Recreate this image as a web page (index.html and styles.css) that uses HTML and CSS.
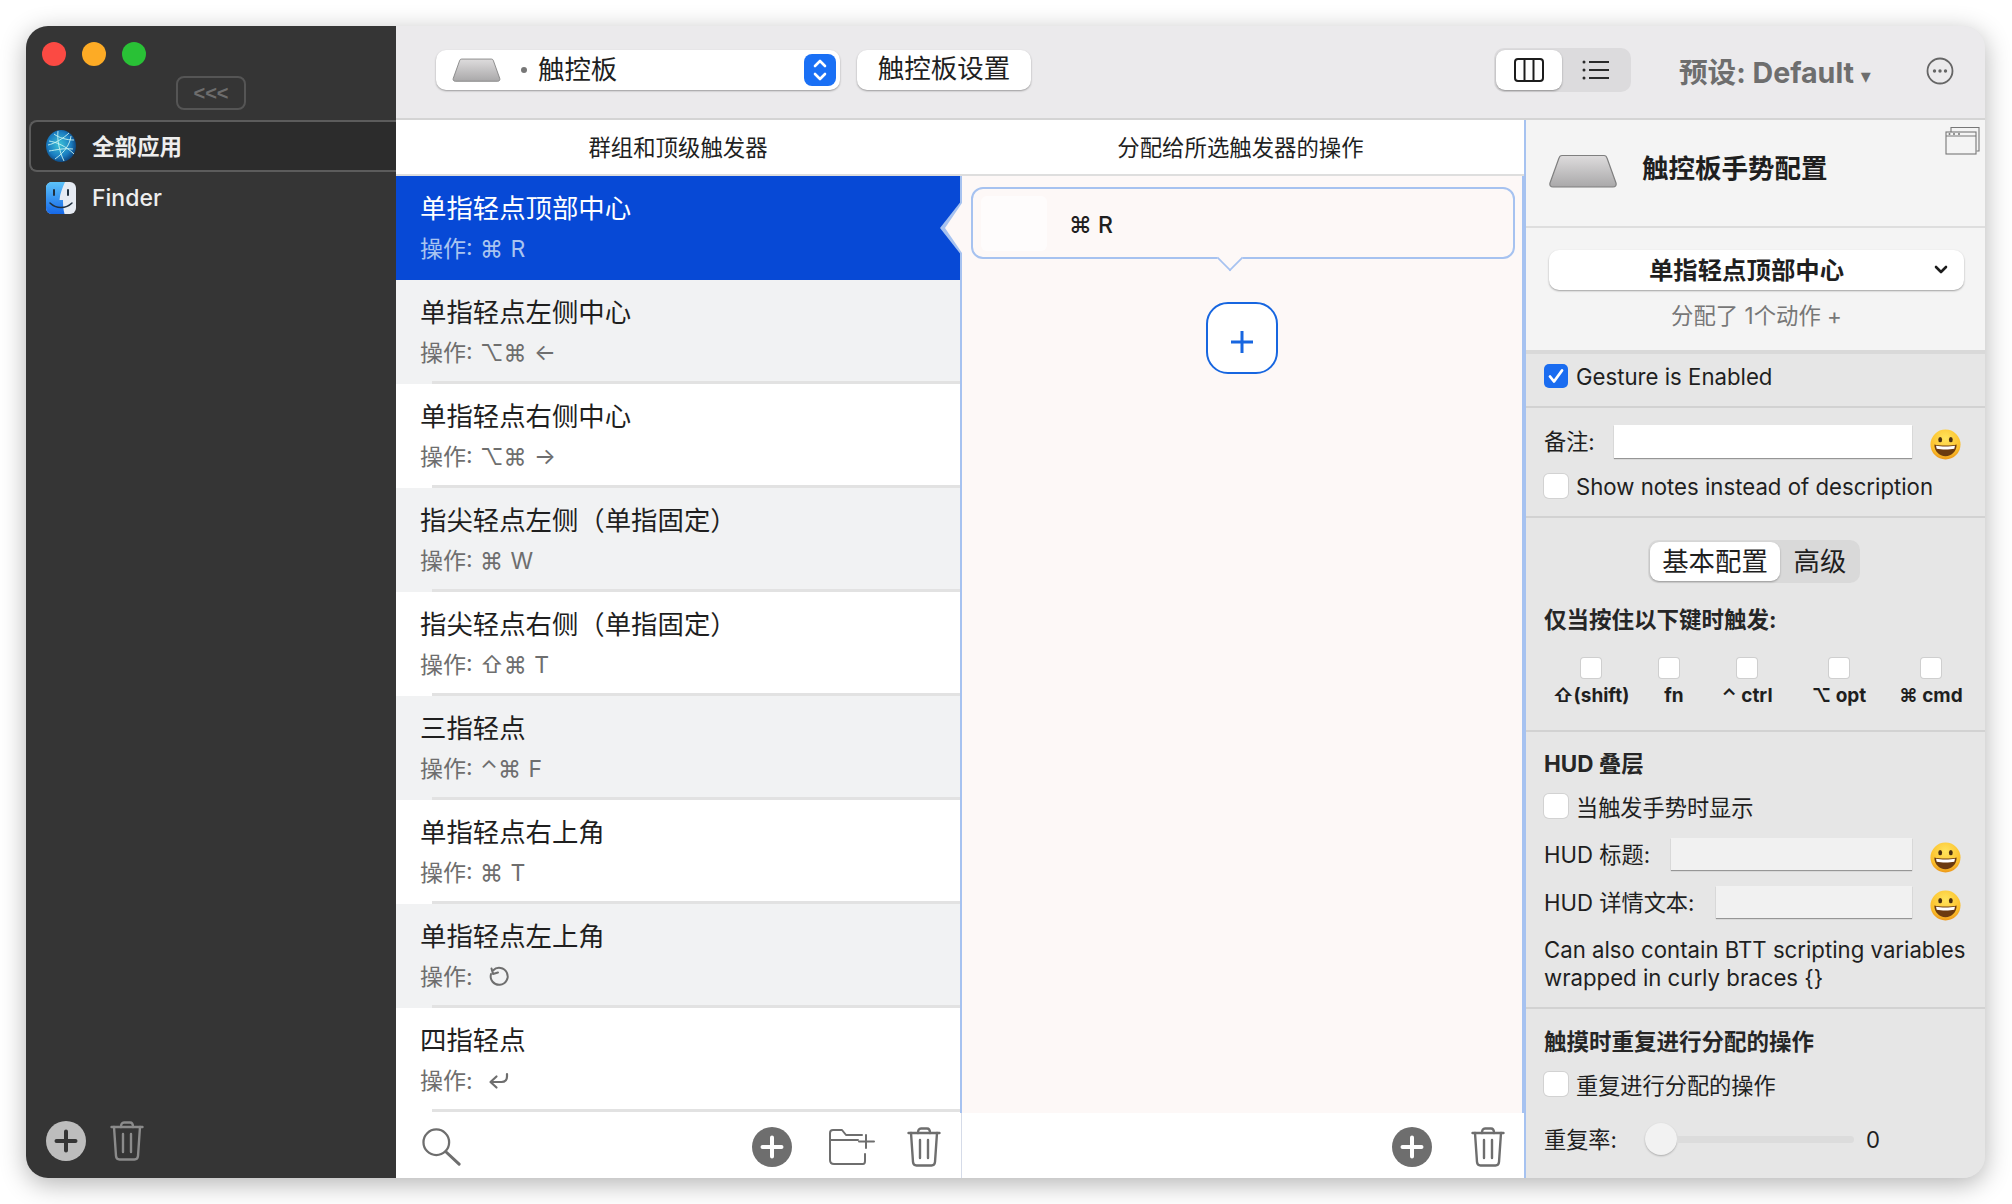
FILE: index.html
```html
<!DOCTYPE html>
<html lang="zh">
<head>
<meta charset="utf-8">
<title>BetterTouchTool</title>
<link rel="stylesheet" href="styles.css">
</head>
<body>
<svg class="defs" width="0" height="0">
  <defs>
    <linearGradient id="padg" x1="0" y1="0" x2="0" y2="1"><stop offset="0" stop-color="#dedcdd"/><stop offset="1" stop-color="#a9a8a9"/></linearGradient>
    <radialGradient id="emog" cx=".5" cy=".3" r=".75"><stop offset="0" stop-color="#ffe45c"/><stop offset=".7" stop-color="#fcc02c"/><stop offset="1" stop-color="#e78a12"/></radialGradient>
    <symbol id="pad" viewBox="0 0 68 34"><path d="M13 1.500h42c1.500 0 2.500.8 3 2.500l9 25c.6 2.200-.6 4-3 4H4c-2.400 0-3.600-1.800-3-4l9-25c.5-1.700 1.500-2.500 3-2.500z" fill="url(#padg)" stroke="#7f7f7f" stroke-width="1.200"/></symbol>
    <symbol id="emoji" viewBox="0 0 32 32"><circle cx="16" cy="16" r="15.500" fill="url(#emog)"/><ellipse cx="10.500" cy="11" rx="2" ry="2.800" fill="#4a2f12"/><ellipse cx="21.500" cy="11" rx="2" ry="2.800" fill="#4a2f12"/><path d="M4.500 16c4 1.500 19 1.500 23 0 0 7-5 12-11.500 12S4.500 23 4.500 16z" fill="#6b3a10"/><path d="M6.200 17.200c5 1 14.600 1 19.600 0l-.7 3.300c-5 1-13.200 1-18.200 0z" fill="#fff"/></symbol>
    <symbol id="trash" viewBox="0 0 34 40"><g fill="none" stroke="currentColor" stroke-width="2.400" stroke-linecap="round" stroke-linejoin="round"><path d="M1.500 6h31"/><path d="M11 6c0-3 1-4.500 3-4.500h6c2 0 3 1.500 3 4.500"/><path d="M4 6l2 29c.2 2.300 1.300 3.500 3.500 3.500h15c2.200 0 3.300-1.200 3.500-3.500l2-29"/><path d="M13 13v18M21 13v18"/></g></symbol>
    <symbol id="plusc" viewBox="0 0 40 40"><circle cx="20" cy="20" r="20" fill="currentColor"/><path d="M20 10.500v19M10.500 20h19" stroke="var(--mark)" stroke-width="4" stroke-linecap="round"/></symbol>
  </defs>
</svg>
<main class="window">
  <aside class="sidebar">
    <div class="lights"><span class="light red"></span><span class="light amber"></span><span class="light green"></span></div>
    <div class="collapse">&lt;&lt;&lt;</div>
    <div class="app app-on">
      <svg class="appicon" viewBox="0 0 30 32">
        <defs><radialGradient id="globe" cx=".45" cy=".45" r=".6"><stop offset="0" stop-color="#3cc4d8"/><stop offset=".65" stop-color="#1a7cc0"/><stop offset="1" stop-color="#0a3a70"/></radialGradient></defs>
        <ellipse cx="15" cy="16" rx="15" ry="16" fill="url(#globe)"/>
        <path d="M2 15C8 14 18 8 23 3M3 11c7 1 17 5 25 13M12 1c-1 8 1 20 6 30M25 6c-1 8-6 16-16 23M3 21c7-1 14-3 24-2M8 4c5 4 13 6 20 6" fill="none" stroke="#c9f4f2" stroke-width=".9"/>
      </svg>
      <span class="appname strong">全部应用</span>
    </div>
    <div class="app">
      <svg class="appicon" viewBox="0 0 30 32">
        <defs><linearGradient id="fl" x1="0" y1="0" x2="0" y2="1"><stop offset="0" stop-color="#5cc3fa"/><stop offset="1" stop-color="#1668e8"/></linearGradient></defs>
        <rect width="30" height="32" rx="6" fill="#e6ebf3"/>
        <path d="M6 0h13c-2.500 6-5 11-5.500 18H17c0 5 .3 9 1.500 14H6c-3.500 0-6-2.500-6-6V6c0-3.500 2.500-6 6-6z" fill="url(#fl)"/>
        <path d="M8 8v5M22 8v5" stroke="#20303f" stroke-width="2" stroke-linecap="round"/>
        <path d="M4 21c6 6 16 6 22 0" fill="none" stroke="#20303f" stroke-width="1.500" stroke-linecap="round"/>
      </svg>
      <span class="appname">Finder</span>
    </div>
    <div class="side-foot">
      <svg class="ic40 plus-light"><use href="#plusc"/></svg>
      <svg class="ictrash trash-dark"><use href="#trash"/></svg>
    </div>
  </aside>

  <div class="main">
    <header class="toolbar">
      <div class="popup">
        <svg class="padsmall"><use href="#pad"/></svg>
        <span class="dot"></span>
        <span class="popup-label">触控板</span>
        <span class="stepper">
          <svg width="20" height="26" viewBox="0 0 20 26"><path d="M5 9l5-5 5 5M5 17l5 5 5-5" fill="none" stroke="#fff" stroke-width="2.600" stroke-linecap="round" stroke-linejoin="round"/></svg>
        </span>
      </div>
      <div class="btn">触控板设置</div>
      <div class="viewseg">
        <span class="viewon">
          <svg width="30" height="24" viewBox="0 0 30 24"><rect x="1" y="1" width="28" height="22" rx="3" fill="none" stroke="#1c1c1c" stroke-width="2"/><path d="M10.500 1v22M19.500 1v22" stroke="#1c1c1c" stroke-width="2"/></svg>
        </span>
        <span class="viewoff">
          <svg width="28" height="20" viewBox="0 0 28 20"><g stroke="#2a2a2a" stroke-width="2"><path d="M7 2h20M7 10h20M7 18h20"/></g><g fill="#2a2a2a"><circle cx="2" cy="2" r="1.500"/><circle cx="2" cy="10" r="1.500"/><circle cx="2" cy="18" r="1.500"/></g></svg>
        </span>
      </div>
      <div class="preset">预设: Default <small>▾</small></div>
      <svg class="more" width="28" height="28" viewBox="0 0 28 28"><circle cx="14" cy="14" r="12.500" fill="none" stroke="#666" stroke-width="1.800"/><g fill="#666"><circle cx="8.500" cy="14" r="1.700"/><circle cx="14" cy="14" r="1.700"/><circle cx="19.500" cy="14" r="1.700"/></g></svg>
    </header>

    <div class="content">
      <section class="col col-list">
        <div class="colhead">群组和顶级触发器</div>
        <div class="rows">
          <div class="row row-sel">
            <div class="rt">单指轻点顶部中心</div><div class="rs">操作: ⌘ R</div>
            <span class="beak"></span>
          </div>
          <div class="row row-alt"><div class="rt">单指轻点左侧中心</div><div class="rs">操作: ⌥⌘ ←</div></div>
          <div class="row"><div class="rt">单指轻点右侧中心</div><div class="rs">操作: ⌥⌘ →</div></div>
          <div class="row row-alt"><div class="rt">指尖轻点左侧（单指固定）</div><div class="rs">操作: ⌘ W</div></div>
          <div class="row"><div class="rt">指尖轻点右侧（单指固定）</div><div class="rs">操作: ⇧⌘ T</div></div>
          <div class="row row-alt"><div class="rt">三指轻点</div><div class="rs">操作: ⌃⌘ F</div></div>
          <div class="row"><div class="rt">单指轻点右上角</div><div class="rs">操作: ⌘ T</div></div>
          <div class="row row-alt"><div class="rt">单指轻点左上角</div><div class="rs">操作: <svg class="undo" width="22" height="22" viewBox="0 0 22 22"><path d="M5 4.500A8.500 8.500 0 1 1 3 8" fill="none" stroke="#6e6e6e" stroke-width="2" stroke-linecap="round"/><path d="M3.500 2.500l1.500 5.500 5-1.500" fill="none" stroke="#6e6e6e" stroke-width="2" stroke-linecap="round" stroke-linejoin="round"/></svg></div></div>
          <div class="row"><div class="rt">四指轻点</div><div class="rs">操作: <svg class="undo" width="22" height="20" viewBox="0 0 22 20"><path d="M19 2v2.500c0 3.500-2 5.500-5.500 5.500H3M8.500 4.500L2.500 10l6 5.500" fill="none" stroke="#6e6e6e" stroke-width="2.200" stroke-linecap="round" stroke-linejoin="round"/></svg></div></div>
        </div>
        <footer class="foot foot-list">
          <svg class="search" width="40" height="38" viewBox="0 0 42 40"><circle cx="15" cy="15" r="13.500" fill="none" stroke="#6e6e6e" stroke-width="2.400"/><path d="M25 25l14 13" stroke="#6e6e6e" stroke-width="3.200" stroke-linecap="round"/></svg>
          <svg class="ic40 plus-dark push"><use href="#plusc"/></svg>
          <svg class="folder" width="48" height="36" viewBox="0 0 48 36"><g fill="none" stroke="#6e6e6e" stroke-width="2" stroke-linecap="round" stroke-linejoin="round"><path d="M34 35H5c-2.500 0-4-1.500-4-4V4c0-2 1-3 3-3h9l4 5h16M1 11h28M36 25v7c0 1.500-.8 3-2 3"/><path d="M37 6v13M30 12.500h15"/></g></svg>
          <svg class="ictrash trash-gray"><use href="#trash"/></svg>
        </footer>
      </section>

      <section class="col col-mid">
        <div class="colhead">分配给所选触发器的操作</div>
        <div class="midbody">
          <div class="card">
            <span class="cardicon"></span>
            <span class="cardtext">⌘ R</span>
            <span class="cardnotch"></span>
          </div>
          <div class="addbtn"><svg width="22" height="22" viewBox="0 0 22 22"><path d="M11 0v22M0 11h22" stroke="#1766e0" stroke-width="3"/></svg></div>
        </div>
        <footer class="foot foot-mid">
          <svg class="ic40 plus-dark"><use href="#plusc"/></svg>
          <svg class="ictrash trash-gray"><use href="#trash"/></svg>
        </footer>
      </section>

      <aside class="panel">
        <div class="sec sec-head">
          <svg class="padbig"><use href="#pad"/></svg>
          <h2 class="ptitle">触控板手势配置</h2>
          <svg class="winicon" width="36" height="30" viewBox="0 0 36 30"><g fill="none" stroke="#777" stroke-width="1.100"><path d="M6 6V1.500h28V25h-2.500"/><rect x="1" y="6" width="30" height="22" fill="#f4f4f4"/><path d="M1 10h30"/></g><g fill="#777"><circle cx="4.500" cy="8" r="1"/><circle cx="9" cy="8" r="1"/><circle cx="14" cy="8" r="1"/></g></svg>
        </div>
        <div class="sec sec-trigger">
          <div class="trigger"><span>单指轻点顶部中心</span>
            <svg class="chev" width="14" height="10" viewBox="0 0 14 10"><path d="M2 2l5 5 5-5" fill="none" stroke="#1c1c1c" stroke-width="2.600" stroke-linecap="round" stroke-linejoin="round"/></svg>
          </div>
          <div class="assigned">分配了 1个动作 +</div>
        </div>
        <div class="sec sec-enable">
          <label class="check"><span class="cb cb-on"><svg width="20" height="20" viewBox="0 0 20 20"><path d="M4 10.500l4 5 8-11" fill="none" stroke="#fff" stroke-width="2.800" stroke-linecap="round" stroke-linejoin="round"/></svg></span>Gesture is Enabled</label>
        </div>
        <div class="sec sec-notes">
          <div class="field"><span class="flabel">备注:</span><span class="input"></span><svg class="emoji"><use href="#emoji"/></svg></div>
          <label class="check"><span class="cb"></span>Show notes instead of description</label>
        </div>
        <div class="sec sec-mods">
          <div class="tabs"><span class="tab-on">基本配置</span><span class="tab-off">高级</span></div>
          <div class="strong-label">仅当按住以下键时触发:</div>
          <div class="mods">
            <div class="mod m1"><span class="cb-s"></span><b>⇧(shift)</b></div>
            <div class="mod m2"><span class="cb-s"></span><b>fn</b></div>
            <div class="mod m3"><span class="cb-s"></span><b>⌃ ctrl</b></div>
            <div class="mod m4"><span class="cb-s"></span><b>⌥ opt</b></div>
            <div class="mod m5"><span class="cb-s"></span><b>⌘ cmd</b></div>
          </div>
        </div>
        <div class="sec sec-hud">
          <div class="strong-label hudtitle">HUD 叠层</div>
          <label class="check hudcheck"><span class="cb"></span>当触发手势时显示</label>
          <div class="field hudf1"><span class="flabel">HUD 标题:</span><span class="input input-dim"></span><svg class="emoji"><use href="#emoji"/></svg></div>
          <div class="field hudf2"><span class="flabel">HUD 详情文本:</span><span class="input input-dim"></span><svg class="emoji"><use href="#emoji"/></svg></div>
          <p class="hint">Can also contain BTT scripting variables<br>wrapped in curly braces {}</p>
        </div>
        <div class="sec sec-repeat">
          <div class="strong-label">触摸时重复进行分配的操作</div>
          <label class="check repcheck"><span class="cb"></span>重复进行分配的操作</label>
          <div class="rate"><span class="flabel">重复率:</span><span class="slider"><span class="knob"></span><span class="track"></span></span><span class="rateval">0</span></div>
        </div>
      </aside>
    </div>
  </div>
</main>
</body>
</html>
```
FILE: styles.css
```css
* { box-sizing: border-box; }
html, body { margin: 0; height: 100%; background: #fff; }
body {
  width: 2012px; height: 1204px; padding: 26px 27px 26px 26px; overflow: hidden;
  font-family: Inter, "Noto Sans CJK SC", "DejaVu Sans", sans-serif;
  color: #1f1f1f; font-size: 22px;
}
.defs { position: absolute; }
.window {
  display: flex; width: 1959px; height: 1152px; border-radius: 22px; overflow: hidden;
  box-shadow: 0 6px 26px rgba(0,0,0,.3); background: #e6e6e6;
}
.sidebar { width: 370px; flex: none; background: #353535; display: flex; flex-direction: column; color: #eee; }
.lights { display: flex; gap: 16px; padding: 16px 0 0 16px; }
.light { width: 24px; height: 24px; border-radius: 50%; }
.red { background: #fb4a43; } .amber { background: #fdab25; } .green { background: #29c136; }
.collapse {
  width: 70px; height: 34px; margin: 10px 0 0 150px; border: 2px solid #555; border-radius: 8px;
  color: #6d6d6d; font: 700 20px/31px "Liberation Sans", sans-serif; text-align: center;
}
.app { display: flex; align-items: center; height: 52px; margin-left: 3px; padding-left: 15px; border: 2px solid transparent; border-right: 0; }
.app-on { margin-top: 10px; background: #2c2c2c; border-color: #5c5c5c; border-radius: 8px 0 0 8px; }
.app + .app { height: 32px; margin-top: 10px; }
.appicon { width: 30px; height: 32px; flex: none; }
.appname { margin-left: 16px; font-size: 23px; font-weight: 500; }
.appname.strong { font-size: 22.500px; font-weight: 700; padding-bottom: 3px; }
.side-foot { margin-top: auto; display: flex; align-items: center; gap: 24px; padding: 0 0 17px 20px; }
.ic40 { width: 40px; height: 40px; flex: none; }
.ictrash { width: 34px; height: 40px; flex: none; }
.plus-light { color: #bdbdbd; --mark: #353535; }
.trash-dark { color: #8b8b8b; }
.plus-dark { color: #6e6e6e; --mark: #fff; }
.trash-gray { color: #6e6e6e; }

.main { flex: 1; min-width: 0; display: flex; flex-direction: column; }
.toolbar { height: 94px; flex: none; display: flex; align-items: flex-start; background: #ebeaec; border-bottom: 2px solid #d4d4d4; padding: 24px 0 0 40px; }
.popup {
  width: 404px; height: 40px; display: flex; align-items: center; background: #fff; border-radius: 10px;
  box-shadow: 0 1px 2px rgba(0,0,0,.35); padding: 0 4px 0 16px;
}
.padsmall { width: 49px; height: 24px; }
.dot { width: 6px; height: 6px; border-radius: 50%; background: #777; margin-left: 20px; }
.popup-label { font-size: 26.400px; margin: -2px 0 0 11px; line-height: 38px; }
.stepper { margin-left: auto; width: 32px; height: 32px; border-radius: 8px; background: #1a70f5; display: flex; align-items: center; justify-content: center; }
.btn {
  margin-left: 17px; width: 174px; height: 40px; background: #fff; border-radius: 10px; text-align: center;
  font-size: 26.500px; line-height: 36px; box-shadow: 0 1px 2px rgba(0,0,0,.35);
}
.viewseg { margin-left: 463px; margin-top: -2px; width: 137px; height: 44px; display: flex; background: #dcdbdd; border-radius: 10px; padding: 2px; }
.viewon { width: 66px; height: 40px; background: #fff; border-radius: 9px; box-shadow: 0 1px 2px rgba(0,0,0,.35); display: flex; align-items: center; justify-content: center; }
.viewoff { flex: 1; display: flex; align-items: center; justify-content: center; }
.preset { margin-left: 48px; margin-top: 5px; font-size: 28.600px; line-height: 36px; font-weight: 700; color: #6e6e6e; white-space: nowrap; }
.preset small { font-size: 20px; }
.more { margin-left: 55px; margin-top: 7px; }

.content { flex: 1; min-height: 0; display: flex; }
.col { display: flex; flex-direction: column; flex: none; background: #fff; }
.col-list { width: 566px; }
.col-mid { width: 562px; }
.colhead { height: 56px; flex: none; text-align: center; line-height: 55px; font-size: 22.400px; border-bottom: 2px solid #dedede; }
.col-list .colhead { padding-right: 2px; }
.col-mid .colhead { padding-right: 5px; }
.rows { flex: 1; min-height: 0; border-right: 2px solid #a6c2f0; }
.row { position: relative; height: 104px; display: flex; flex-direction: column; padding-left: 24px; }
.row::after { content: ""; display: block; height: 3px; margin: auto 0 0 12px; background: #e2e2e2; }
.row-alt { background: #f1f2f3; }
.row-sel { background: #0749d6; }
.row-sel::after { display: none; }
.rt { font-size: 26.400px; line-height: 36px; padding-top: 14px; height: 50px; white-space: nowrap; }
.rs { font-size: 23px; word-spacing: 1px; line-height: 30px; margin-top: 8px; height: 30px; color: #6e6e6e; white-space: nowrap; }
.row-sel .rt { color: #fff; }
.row-sel .rs { color: #a9c4f0; }
.undo { vertical-align: -3px; margin-left: 8px; }
.beak { position: absolute; right: -2px; top: 24px; width: 22px; height: 56px; background: #a6c2f0; clip-path: polygon(100% 0, 0 50%, 100% 100%); }
.beak::after { content: ""; position: absolute; inset: 3px 0 3px 5px; background: #fdf8f7; clip-path: polygon(100% 0, 0 50%, 100% 100%); }
.foot { height: 65px; flex: none; display: flex; align-items: center; padding-top: 2px; }
.foot-list { border-right: 1px solid #d5dbe8; padding-left: 26px; padding-right: 20px; }
.push { margin-left: auto; }
.folder { margin-left: 37px; }
.foot-list .ictrash { margin-left: 30px; }
.foot-mid { justify-content: flex-end; padding-right: 19px; }
.foot-mid .ictrash { margin-left: 39px; }
.midbody { flex: 1; min-height: 0; background: #fdf8f7; border-right: 2px solid #a6c2f0; padding: 11px 0 0 9px; }
.card { position: relative; width: 544px; height: 72px; border: 2px solid #a6c2f0; border-radius: 12px; display: flex; align-items: center; padding: 3px 0 0 8px; background: #fdf8f7; }
.cardicon { width: 66px; height: 55px; margin-top: -3px; border-radius: 6px; background: #fefcfc; }
.cardtext { margin-left: 22px; font-size: 23px; font-weight: 500; }
.cardnotch { position: absolute; left: 246px; bottom: -12px; width: 22px; height: 22px; transform: rotate(45deg) scale(.85); background: #fdf8f7; border-right: 2px solid #a6c2f0; border-bottom: 2px solid #a6c2f0; }
.addbtn { width: 72px; height: 72px; margin: 43px 0 0 235px; padding-top: 8px; border: 2px solid #1766e0; border-radius: 22px; background: #fff; display: flex; align-items: center; justify-content: center; }

.panel { flex: 1; min-width: 0; border-left: 2px solid #a6c2f0; background: #e6e6e6; font-size: 22.200px; }
.sec { border-bottom: 2px solid #d2d2d2; padding-left: 18px; }
.sec-head { position: relative; height: 108px; background: #f4f4f4; display: flex; align-items: center; padding: 0 0 5px 23px; border-bottom-color: #dedede; }
.padbig { width: 68px; height: 34px; flex: none; }
.ptitle { margin: 0 0 0 25px; font-size: 26.500px; line-height: 36px; font-weight: 700; padding-bottom: 6px; }
.winicon { position: absolute; right: 4px; top: 6px; }
.sec-trigger { height: 126px; background: #f4f4f4; border-bottom: 4px solid #d9d9d9; padding: 22px 0 0 23px; }
.trigger { position: relative; width: 415px; height: 40px; background: #fff; border-radius: 10px; box-shadow: 0 1px 2px rgba(0,0,0,.35); text-align: center; font-size: 24.400px; font-weight: 700; line-height: 40px; padding-right: 20px; }
.chev { position: absolute; right: 16px; top: 15px; }
.assigned { margin: 12px 0 0 -23px; text-align: center; font-size: 22.400px; color: #777; line-height: 28px; padding-left: 2px; }
.check { display: flex; align-items: center; height: 24px; white-space: nowrap; }
.cb { width: 24px; height: 24px; flex: none; margin-right: 8px; border-radius: 5px; background: #fff; box-shadow: 0 0 0 1px #d2d2d2; display: flex; align-items: center; justify-content: center; }
.cb-on { background: #1a6cf0; box-shadow: none; }
.sec-enable { height: 54px; padding-top: 10px; }
.sec-notes { height: 110px; padding-top: 16px; }
.field { display: flex; align-items: center; height: 34px; }
.flabel { white-space: nowrap; margin-top: -3px; }
.input { height: 33px; width: 298px; margin-left: auto; flex: none; background: #fff; box-shadow: 0 1px 1px rgba(0,0,0,.35); }
.input-dim { background: #f1f1f1; }
.hudf1 .input { width: 241px; }
.hudf2 .input { width: 196px; }
.emoji { width: 31px; height: 31px; margin: 6px 24px 0 18px; flex: none; }
.sec-notes .check { margin-top: 16px; }
.sec-mods { height: 214px; padding-top: 22px; }
.tabs { display: flex; width: 212px; height: 43px; margin-left: 104px; background: #d9d9d9; border-radius: 10px; font-size: 26.400px; line-height: 38px; padding: 2px; }
.tab-on { width: 130px; background: #fff; border-radius: 9px; text-align: center; box-shadow: 0 1px 2px rgba(0,0,0,.3); }
.tab-off { flex: 1; text-align: center; padding-left: 2px; }
.strong-label { font-size: 22.500px; font-weight: 700; line-height: 30px; color: #262626; }
.sec-mods .strong-label { margin-top: 22px; }
.mods { display: flex; margin-top: 23px; margin-left: -1px; }
.mod { display: flex; flex-direction: column; align-items: center; flex: none; }
.mod b { font-size: 19px; font-weight: 700; line-height: 22px; margin-top: 7px; white-space: nowrap; font-family: Inter, "DejaVu Sans", sans-serif; }
.cb-s { width: 20px; height: 20px; background: #fff; border-radius: 3px; box-shadow: 0 0 0 1px #cfcfcf; }
.m1 { width: 96px; } .m2 { width: 60px; } .m3 { width: 96px; } .m4 { width: 88px; } .m5 { width: 96px; }
.m2 b { margin-left: 10px; }
.sec-hud { height: 277px; padding-top: 17px; }
.hudcheck { margin-top: 15px; }
.hudf1 { margin-top: 20px; height: 32px; }
.hudf2 { margin-top: 16px; height: 32px; }
.hudf1 .input, .hudf2 .input { height: 32px; }
.hint { margin: 18px 0 0; line-height: 28px; white-space: nowrap; }
.sec-repeat { border-bottom: 0; padding-top: 18px; }
.repcheck { margin-top: 15px; }
.rate { display: flex; align-items: center; margin-top: 27px; height: 32px; }
.slider { display: flex; align-items: center; margin-left: 28px; width: 209px; }
.knob { width: 32px; height: 32px; border-radius: 50%; background: #f2f2f2; box-shadow: 0 1px 2px rgba(0,0,0,.25); flex: none; }
.track { flex: 1; height: 7px; background: #dcdcdc; border-radius: 0 4px 4px 0; }
.rateval { margin-left: 12px; }
```
